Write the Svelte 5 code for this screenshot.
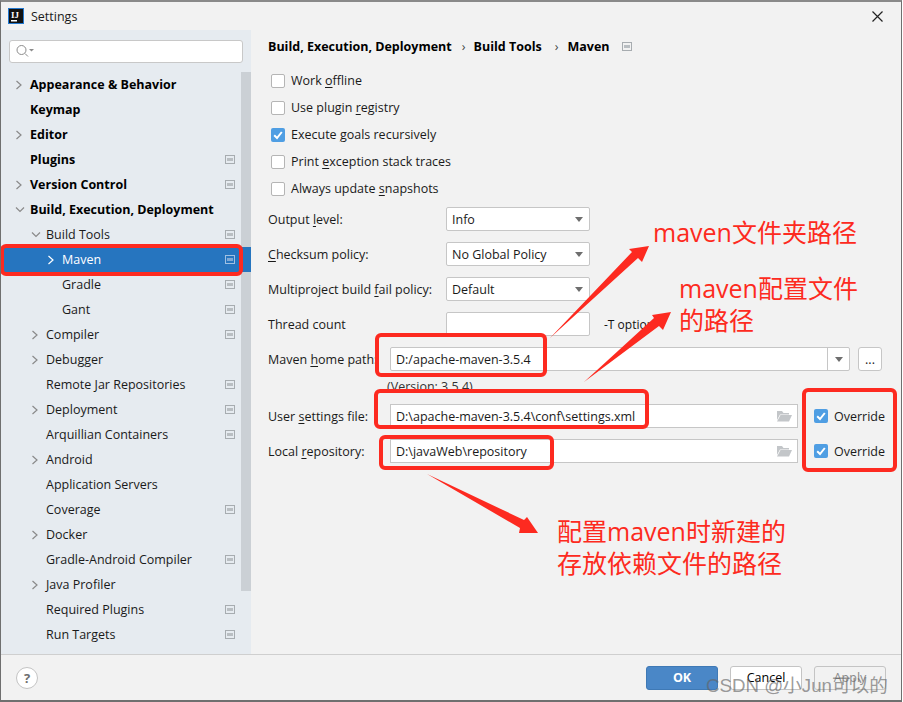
<script lang="ts">
  const tree = [
    { label: 'Appearance & Behavior', depth: 0, arrow: '>', bold: true },
    { label: 'Keymap', depth: 0, bold: true },
    { label: 'Editor', depth: 0, arrow: '>', bold: true },
    { label: 'Plugins', depth: 0, bold: true, badge: true },
    { label: 'Version Control', depth: 0, arrow: '>', bold: true, badge: true },
    { label: 'Build, Execution, Deployment', depth: 0, arrow: 'v', bold: true },
    { label: 'Build Tools', depth: 1, arrow: 'v', badge: true },
    { label: 'Maven', depth: 2, arrow: '>', badge: true, selected: true },
    { label: 'Gradle', depth: 2, badge: true },
    { label: 'Gant', depth: 2, badge: true },
    { label: 'Compiler', depth: 1, arrow: '>', badge: true },
    { label: 'Debugger', depth: 1, arrow: '>' },
    { label: 'Remote Jar Repositories', depth: 1, badge: true },
    { label: 'Deployment', depth: 1, arrow: '>', badge: true },
    { label: 'Arquillian Containers', depth: 1, badge: true },
    { label: 'Android', depth: 1, arrow: '>' },
    { label: 'Application Servers', depth: 1 },
    { label: 'Coverage', depth: 1, badge: true },
    { label: 'Docker', depth: 1, arrow: '>' },
    { label: 'Gradle-Android Compiler', depth: 1, badge: true },
    { label: 'Java Profiler', depth: 1, arrow: '>' },
    { label: 'Required Plugins', depth: 1, badge: true },
    { label: 'Run Targets', depth: 1, badge: true }
  ];

  const checks = [
    { before: 'Work ', key: 'o', after: 'ffline', on: false },
    { before: 'Use plugin ', key: 'r', after: 'egistry', on: false },
    { before: 'Execute ', key: 'g', after: 'oals recursively', on: true },
    { before: 'Print ', key: 'e', after: 'xception stack traces', on: false },
    { before: 'Always update ', key: 's', after: 'napshots', on: false }
  ];

  const selects = [
    { before: 'Output ', key: 'l', after: 'evel:', value: 'Info' },
    { before: '', key: 'C', after: 'hecksum policy:', value: 'No Global Policy' },
    { before: 'Multiproject build ', key: 'f', after: 'ail policy:', value: 'Default' }
  ];

  const paths = [
    { before: 'User ', key: 's', after: 'ettings file:', value: 'D:\\apache-maven-3.5.4\\conf\\settings.xml' },
    { before: 'Local ', key: 'r', after: 'epository:', value: 'D:\\javaWeb\\repository' }
  ];

  const redBoxes = [
    { x: 0, y: 244, w: 243, h: 32 },
    { x: 375, y: 333, w: 172, h: 44 },
    { x: 374, y: 389, w: 275, h: 40 },
    { x: 379, y: 435, w: 175, h: 35 },
    { x: 802, y: 388, w: 95, h: 84 }
  ];
</script>

{#snippet box(on)}
  <span class="box" class:on>
    {#if on}
      <svg width="14" height="14" viewBox="0 0 14 14"><path d="M3.2 7.3 6 10l4.8-6" fill="none" stroke="#fff" stroke-width="2" /></svg>
    {/if}
  </span>
{/snippet}

{#snippet folder()}
  <svg class="folder" width="16" height="14" viewBox="0 0 16 14">
    <path d="M1 2h5l1.500 2H13v1.500H4L1 11z" fill="#c3c6c9" />
    <path d="M4.500 6H16l-3 6.500H1z" fill="#c3c6c9" />
  </svg>
{/snippet}

<div class="window">
  <header class="title">
    <svg class="logo" width="16" height="16" viewBox="0 0 16 16">
      <rect x="0.500" y="0.500" width="15" height="15" fill="#111" stroke="#2479cf" />
      <rect x="3" y="12" width="6" height="1.500" fill="#fff" />
      <text x="3" y="10" class="logo-text">IJ</text>
    </svg>
    <span>Settings</span>
    <svg class="close" width="11" height="11" viewBox="0 0 11 11">
      <path d="M0.500 0.500l10 10M10.500 0.500l-10 10" stroke="#222" stroke-width="1.200" />
    </svg>
  </header>

  <div class="body">
    <aside class="side">
      <div class="search">
        <svg width="20" height="14" viewBox="0 0 20 14">
          <circle cx="6.500" cy="6" r="4.500" fill="none" stroke="#8c8c8c" />
          <path d="M10 9.500l3 3" stroke="#8c8c8c" />
          <path d="M14 5h5l-2.500 2.500z" fill="#8c8c8c" />
        </svg>
      </div>
      <div class="tree-wrap">
        <ul class="tree">
          {#each tree as item}
            <li class="row d{item.depth}" class:bold={item.bold} class:selected={item.selected}>
              <span class="arrow">
                {#if item.arrow === '>'}
                  <svg width="8" height="10" viewBox="0 0 8 10"><path d="M1.500 1l4.500 4-4.500 4" fill="none" stroke={item.selected ? '#fff' : '#8a8a8a'} stroke-width="1.200" /></svg>
                {:else if item.arrow === 'v'}
                  <svg width="10" height="8" viewBox="0 0 10 8"><path d="M1 1.500l4 4 4-4" fill="none" stroke="#8a8a8a" stroke-width="1.200" /></svg>
                {/if}
              </span>
              <span class="label">{item.label}</span>
              {#if item.badge}
                <svg class="badge" width="10" height="9" viewBox="0 0 10 9">
                  <rect x="0.500" y="0.500" width="9" height="8" fill="none" stroke={item.selected ? '#9fc0e2' : '#a7acb0'} />
                  <rect x="2" y="3" width="6" height="3" fill={item.selected ? '#7fa9d6' : '#b9bec2'} />
                </svg>
              {/if}
            </li>
          {/each}
        </ul>
        <div class="scroll"></div>
      </div>
    </aside>

    <main class="content">
      <div class="crumbs">
        <b>Build, Execution, Deployment</b>
        <i class="sep">›</i>
        <b>Build Tools</b>
        <i class="sep wide">›</i>
        <b>Maven</b>
        <svg class="crumb-badge" width="10" height="9" viewBox="0 0 10 9">
          <rect x="0.500" y="0.500" width="9" height="8" fill="none" stroke="#a7acb0" />
          <rect x="2" y="3" width="6" height="3" fill="#b9bec2" />
        </svg>
      </div>

      <div class="checks">
        {#each checks as c}
          <label class="check">
            {@render box(c.on)}
            <span>{c.before}<u>{c.key}</u>{c.after}</span>
          </label>
        {/each}
      </div>

      <div class="form">
        {#each selects as s}
          <div class="field">
            <span class="name">{s.before}<u>{s.key}</u>{s.after}</span>
            <div class="select">{s.value}<em class="caret"></em></div>
          </div>
        {/each}

        <div class="field">
          <span class="name">Thread count</span>
          <div class="input thread"></div>
          <span class="hint">-T option</span>
        </div>

        <div class="field">
          <span class="name short">Maven <u>h</u>ome path:</span>
          <div class="input home">
            <span>D:/apache-maven-3.5.4</span>
            <span class="drop"><em class="caret"></em></span>
          </div>
          <div class="more">...</div>
        </div>

        <div class="version">(Version: 3.5.4)</div>

        {#each paths as p}
          <div class="field">
            <span class="name short">{p.before}<u>{p.key}</u>{p.after}</span>
            <div class="input path">
              <span>{p.value}</span>
              {@render folder()}
            </div>
            <label class="check override">
              {@render box(true)}
              <span>Override</span>
            </label>
          </div>
        {/each}
      </div>
    </main>
  </div>

  <footer class="foot">
    <div class="help">?</div>
    <div class="buttons">
      <div class="btn ok">OK</div>
      <div class="btn">Cancel</div>
      <div class="btn off">Apply</div>
    </div>
  </footer>

  <!-- annotations drawn over the dialog -->
  {#each redBoxes as r}
    <div class="red" style="left:{r.x}px;top:{r.y}px;width:{r.w}px;height:{r.h}px"></div>
  {/each}

  <svg class="arrows" width="903" height="702" viewBox="0 0 903 702">
    <polygon fill="#fd2a20" points="550,338 632,252 629,249 649,246 642,262 638,258" />
    <polygon fill="#fd2a20" points="584,382 654,318 652,315 671,312 663,330 659,326" />
    <polygon fill="#fd2a20" points="427,474 524,520 527,517 538,533 519,533 520,528" />
  </svg>

  <div class="note n1">maven文件夹路径</div>
  <div class="note n2">maven配置文件<br />的路径</div>
  <div class="note n3">配置maven时新建的<br />存放依赖文件的路径</div>
  <div class="mark">CSDN @小Jun可以的</div>
</div>

<style>
  :global(body) {
    margin: 0;
    background: #fff;
  }

  .window {
    position: relative;
    width: 902px;
    height: 702px;
    box-sizing: border-box;
    border: 1px solid #6f6f6f;
    border-top: 2px solid #8a8a8a;
    border-bottom-width: 2px;
    background: #f2f2f2;
    font-family: "Open Sans", "Noto Sans CJK SC", sans-serif;
    font-size: 12.500px;
    color: #1a1a1a;
    display: flex;
    flex-direction: column;
    overflow: hidden;
  }

  u {
    text-underline-offset: 2px;
  }

  .title {
    height: 28px;
    flex: none;
    display: flex;
    align-items: center;
    gap: 7px;
    padding-left: 7px;
  }

  .logo-text {
    font-size: 9px;
    font-weight: 700;
    fill: #fff;
    font-family: "Liberation Serif", serif;
  }

  .close {
    margin-left: auto;
    margin-right: 18px;
  }

  .body {
    flex: 1;
    display: flex;
    min-height: 0;
  }

  .side {
    width: 250px;
    flex: none;
    background: #e6ebf0;
    display: flex;
    flex-direction: column;
  }

  .search {
    margin: 10px 8px 0 8px;
    height: 23px;
    box-sizing: border-box;
    background: #fff;
    border: 1px solid #c8c8c8;
    border-radius: 3px;
    padding: 3px 0 0 5px;
  }

  .tree-wrap {
    position: relative;
    flex: 1;
    margin-top: 9px;
  }

  .tree {
    list-style: none;
    margin: 0;
    padding: 0;
  }

  .row {
    height: 25px;
    display: flex;
    align-items: center;
    padding-right: 16px;
  }

  .row.bold {
    font-weight: 700;
    color: #000;
  }

  .row.d0 .arrow { margin-left: 14px; }
  .row.d1 .arrow { margin-left: 30px; }
  .row.d2 .arrow { margin-left: 46px; }

  .arrow {
    width: 15px;
    flex: none;
    display: flex;
    align-items: center;
    height: 12px;
  }

  .badge {
    margin-left: auto;
  }

  .row.selected {
    background: #2675bf;
    color: #fff;
    position: relative;
    z-index: 1;
  }

  .scroll {
    position: absolute;
    top: 0;
    right: 0;
    width: 10px;
    height: 519px;
    background: #cbd0d5;
  }

  .content {
    flex: 1;
    padding: 0 0 0 17px;
    position: relative;
  }

  .crumbs {
    margin-top: 7px;
    height: 18px;
    display: flex;
    align-items: center;
    color: #000;
  }

  .sep {
    font-style: normal;
    margin: 0 8px 0 10px;
    color: #444;
  }

  .sep.wide {
    margin: 0 9px 0 13px;
  }

  .crumb-badge {
    margin-left: 12px;
  }

  .checks {
    margin-top: 12px;
    display: flex;
    flex-direction: column;
  }

  .check {
    display: flex;
    align-items: center;
    gap: 6px;
    height: 27px;
    padding-left: 3px;
  }

  .box {
    width: 14px;
    height: 14px;
    box-sizing: border-box;
    border: 1px solid #b5b5b5;
    border-radius: 2px;
    background: #fff;
    flex: none;
  }

  .box.on {
    background: #4f9ee3;
    border: none;
  }

  .box svg {
    display: block;
  }

  .form {
    margin-top: 5px;
    display: flex;
    flex-direction: column;
  }

  .field {
    display: flex;
    align-items: center;
    height: 24px;
    margin-bottom: 11px;
  }

  .name {
    width: 178px;
    flex: none;
  }

  .name.short {
    width: 122px;
  }

  .select,
  .input,
  .more {
    box-sizing: border-box;
    height: 24px;
    background: #fff;
    border: 1px solid #c6c6c6;
    border-radius: 2px;
    display: flex;
    align-items: center;
  }

  .select {
    width: 144px;
    padding-left: 5px;
    justify-content: space-between;
    padding-right: 6px;
  }

  .caret {
    width: 0;
    height: 0;
    border-left: 4.500px solid transparent;
    border-right: 4.500px solid transparent;
    border-top: 5px solid #6e6e6e;
  }

  .input {
    padding-left: 5px;
  }

  .thread {
    width: 144px;
  }

  .hint {
    margin-left: 14px;
    font-size: 12px;
    color: #111;
  }

  .home {
    width: 460px;
    justify-content: space-between;
  }

  .drop {
    width: 21px;
    height: 22px;
    border-left: 1px solid #c6c6c6;
    display: flex;
    align-items: center;
    justify-content: center;
  }

  .more {
    width: 24px;
    margin-left: 8px;
    justify-content: center;
    border-radius: 3px;
  }

  .version {
    margin: -4px 0 0 119px;
    height: 26px;
    color: #333;
  }

  .path {
    width: 408px;
    justify-content: space-between;
    border-radius: 0;
  }

  .folder {
    margin-right: 5px;
  }

  .override {
    margin-left: 13px;
  }

  .foot {
    flex: none;
    height: 45px;
    border-top: 1px solid #cfcfcf;
    display: flex;
    align-items: center;
    justify-content: space-between;
    padding: 0 15px;
  }

  .help {
    width: 22px;
    height: 22px;
    box-sizing: border-box;
    border: 1px solid #c4c4c4;
    border-radius: 50%;
    background: #fff;
    display: flex;
    align-items: center;
    justify-content: center;
    font-weight: 700;
    color: #6e6e6e;
    font-size: 13px;
  }

  .buttons {
    display: flex;
    gap: 12px;
  }

  .btn {
    width: 72px;
    height: 24px;
    box-sizing: border-box;
    border: 1px solid #c4c4c4;
    border-radius: 3px;
    background: #fff;
    display: flex;
    align-items: center;
    justify-content: center;
    color: #000;
  }

  .btn.ok {
    background: #4a87c7;
    border-color: #3f79b5;
    color: #fff;
    font-weight: 700;
  }

  .btn.off {
    background: #f2f2f2;
    color: #8a8a8a;
  }

  .red {
    position: absolute;
    box-sizing: border-box;
    border: 4px solid #fd2a20;
    border-radius: 6px;
    z-index: 2;
    margin: -2px 0 0 -1px;
  }

  .arrows {
    position: absolute;
    left: -1px;
    top: -2px;
    z-index: 2;
  }

  .note {
    position: absolute;
    color: #fd2a20;
    z-index: 3;
    font-size: 25px;
    line-height: 32px;
    font-family: "Open Sans", "Noto Sans CJK SC", sans-serif;
  }

  .n1 { left: 652px; top: 214px; }
  .n2 { left: 678px; top: 270px; }
  .n3 { left: 556px; top: 513px; }

  .mark {
    position: absolute;
    left: 705px;
    top: 668px;
    z-index: 3;
    color: rgba(100, 100, 100, 0.65);
    font-size: 18.700px;
    font-family: "Liberation Sans", "Noto Sans CJK SC", sans-serif;
  }
</style>
